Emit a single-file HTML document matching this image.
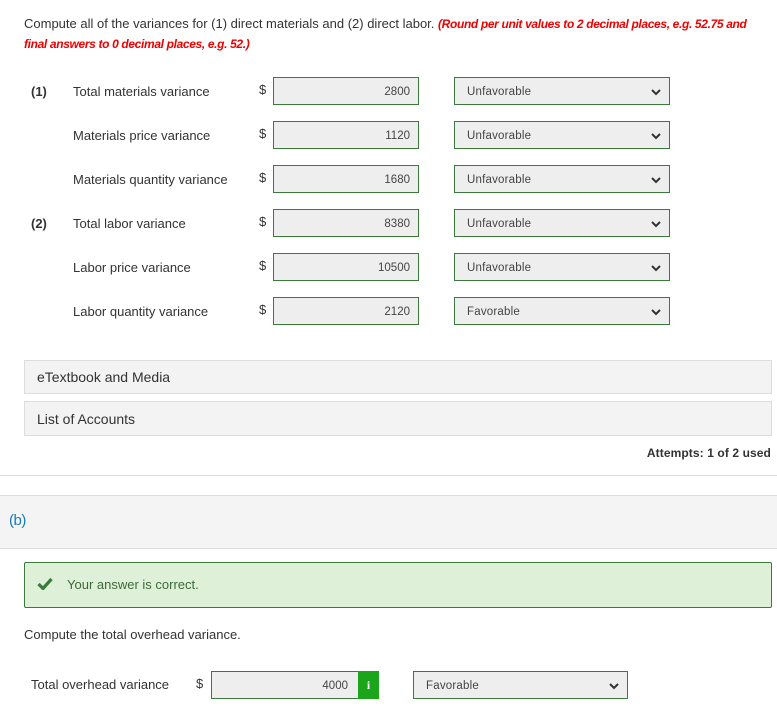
<!DOCTYPE html>
<html><head><style>
body{margin:0;width:777px;height:720px;background:#fff;font-family:"Liberation Sans",sans-serif;color:#333;position:relative;overflow:hidden}
.a{position:absolute;white-space:nowrap}
.t{font-size:13px;letter-spacing:0}
.inp{position:absolute;background:#eee;border:1px solid #3c7a3c;box-sizing:border-box;height:28px;font-size:11.5px;text-align:right;padding-right:8px;line-height:28px;color:#444;letter-spacing:0}
.sel{position:absolute;background:#eee;border:1px solid #3c7a3c;box-sizing:border-box;height:28px;font-size:11.5px;padding-left:12px;line-height:28px;color:#444;letter-spacing:0.2px}
.sel svg{position:absolute;right:8px;top:11px}
.box{position:absolute;left:24px;width:748px;box-sizing:border-box;border:1px solid #ddd;background:#f3f3f3;font-size:14px;letter-spacing:0;padding-left:12px;color:#333}
</style></head><body>
<div class="a t" style="left:24px;top:14px;line-height:19px">Compute all of the variances for (1) direct materials and (2) direct labor. <b style="color:#e00;font-style:italic;font-size:12px;letter-spacing:-0.35px">(Round per unit values to 2 decimal places, e.g. 52.75 and</b><br><b style="color:#e00;font-style:italic;font-size:12px;letter-spacing:-0.35px">final answers to 0 decimal places, e.g. 52.)</b></div>

<div class="a t" style="left:31px;top:84px;font-weight:bold">(1)</div>
<div class="a t" style="left:31px;top:216px;font-weight:bold">(2)</div>

<div class="a t" style="left:73px;top:84px">Total materials variance</div>
<div class="a t" style="left:73px;top:128px">Materials price variance</div>
<div class="a t" style="left:73px;top:172px">Materials quantity variance</div>
<div class="a t" style="left:73px;top:216px">Total labor variance</div>
<div class="a t" style="left:73px;top:260px">Labor price variance</div>
<div class="a t" style="left:73px;top:304px">Labor quantity variance</div>

<div class="a t" style="left:259px;top:82px">$</div>
<div class="a t" style="left:259px;top:126px">$</div>
<div class="a t" style="left:259px;top:170px">$</div>
<div class="a t" style="left:259px;top:214px">$</div>
<div class="a t" style="left:259px;top:258px">$</div>
<div class="a t" style="left:259px;top:302px">$</div>

<div class="inp" style="left:273px;top:77px;width:146px">2800</div>
<div class="inp" style="left:273px;top:121px;width:146px">1120</div>
<div class="inp" style="left:273px;top:165px;width:146px">1680</div>
<div class="inp" style="left:273px;top:209px;width:146px">8380</div>
<div class="inp" style="left:273px;top:253px;width:146px">10500</div>
<div class="inp" style="left:273px;top:297px;width:146px">2120</div>

<div class="sel" style="left:454px;top:77px;width:216px">Unfavorable<svg width="10" height="7"><path d="M1 1L5 5L9 1" stroke="#333" stroke-width="2" fill="none"/></svg></div>
<div class="sel" style="left:454px;top:121px;width:216px">Unfavorable<svg width="10" height="7"><path d="M1 1L5 5L9 1" stroke="#333" stroke-width="2" fill="none"/></svg></div>
<div class="sel" style="left:454px;top:165px;width:216px">Unfavorable<svg width="10" height="7"><path d="M1 1L5 5L9 1" stroke="#333" stroke-width="2" fill="none"/></svg></div>
<div class="sel" style="left:454px;top:209px;width:216px">Unfavorable<svg width="10" height="7"><path d="M1 1L5 5L9 1" stroke="#333" stroke-width="2" fill="none"/></svg></div>
<div class="sel" style="left:454px;top:253px;width:216px">Unfavorable<svg width="10" height="7"><path d="M1 1L5 5L9 1" stroke="#333" stroke-width="2" fill="none"/></svg></div>
<div class="sel" style="left:454px;top:297px;width:216px">Favorable<svg width="10" height="7"><path d="M1 1L5 5L9 1" stroke="#333" stroke-width="2" fill="none"/></svg></div>

<div class="box" style="top:360px;height:34px;line-height:33px">eTextbook and Media</div>
<div class="box" style="top:401px;height:35px;line-height:34px">List of Accounts</div>

<div class="a" style="right:6px;top:446px;font-size:12px;font-weight:bold;letter-spacing:0.1px;color:#333">Attempts: 1 of 2 used</div>

<div class="a" style="left:0;top:475px;width:777px;height:1px;background:#ddd"></div>
<div class="a" style="left:0;top:495px;width:777px;height:54px;background:#f4f4f4;border-top:1px solid #ddd;border-bottom:1px solid #ddd;box-sizing:border-box"></div>
<div class="a" style="left:9px;top:512px;font-size:15px;letter-spacing:-0.5px;color:#1a7ab5">(b)</div>

<div class="a" style="left:24px;top:562px;width:748px;height:46px;box-sizing:border-box;background:#dff0d8;border:1px solid #3c7a3c;border-radius:2px"></div>
<svg class="a" style="left:37px;top:577px" width="16" height="13"><path d="M1.5 7L6 11.5L14.5 2" stroke="#3c7a3c" stroke-width="3.2" fill="none"/></svg>
<div class="a t" style="left:67px;top:577px;color:#3c6a3c">Your answer is correct.</div>

<div class="a t" style="left:24px;top:627px;color:#333">Compute the total overhead variance.</div>

<div class="a t" style="left:31px;top:677px">Total overhead variance</div>
<div class="a t" style="left:196px;top:676px">$</div>
<div class="inp" style="left:211px;top:671px;width:168px;padding-right:30px">4000</div>
<div class="a" style="left:358px;top:671px;width:21px;height:28px;background:#1aa51a;color:#fff;font-weight:bold;font-size:12px;text-align:center;line-height:28px;font-family:'Liberation Serif',serif">i</div>
<div class="sel" style="left:413px;top:671px;width:215px">Favorable<svg width="10" height="7"><path d="M1 1L5 5L9 1" stroke="#333" stroke-width="2" fill="none"/></svg></div>
</body></html>
